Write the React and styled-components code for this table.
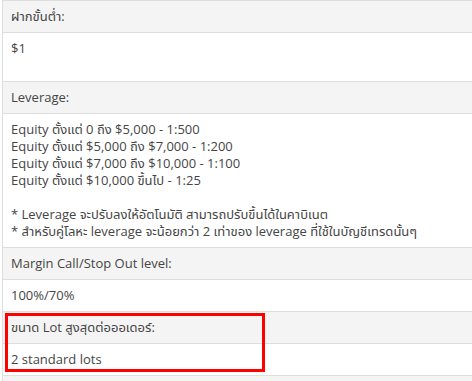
import React from "react";
import styled, { createGlobalStyle } from "styled-components";

const GlobalStyle = createGlobalStyle`
  html, body {
    margin: 0;
    padding: 0;
    background: #ffffff;
  }
  #root {
    width: 472px;
    height: 381px;
    overflow: hidden;
  }
`;

const Table = styled.div`
  position: relative;
  margin-left: 2px;
  width: 520px;
  border-top: 1px solid #dedede;
  border-left: 1px solid #dedede;
  font-family: "Open Sans", "Noto Sans", "Noto Sans Thai", sans-serif;
  font-size: 13px;
  color: #454545;
`;

const Cell = styled.div`
  padding: 7px 8px;
  line-height: 17px;
  border-bottom: 1px solid #dedede;
  background: ${(p) => (p.$head ? "#f4f4f4" : "#ffffff")};
  min-height: ${(p) => (p.$lines || 1) * 17}px;
`;

const Line = styled.div`
  white-space: nowrap;
  min-height: 17px;
`;

const Highlight = styled.div`
  position: absolute;
  left: 2px;
  top: 312px;
  width: 254px;
  height: 53px;
  border: 3px solid #ff0000;
  pointer-events: none;
`;

const rows = [
  { head: "ฝากขั้นต่ำ:", body: ["$1", ""] },
  {
    head: "Leverage:",
    body: [
      "Equity ตั้งแต่ 0 ถึง $5,000 - 1:500",
      "Equity ตั้งแต่ $5,000 ถึง $7,000 - 1:200",
      "Equity ตั้งแต่ $7,000 ถึง $10,000 - 1:100",
      "Equity ตั้งแต่ $10,000 ขึ้นไป - 1:25",
      "",
      "* Leverage จะปรับลงให้อัตโนมัติ สามารถปรับขึ้นได้ในคาบิเนต",
      "* สำหรับคู่โลหะ leverage จะน้อยกว่า 2 เท่าของ leverage ที่ใช้ในบัญชีเทรดนั้นๆ",
    ],
  },
  { head: "Margin Call/Stop Out level:", body: ["100%/70%"] },
  { head: "ขนาด Lot สูงสุดต่อออเดอร์:", body: ["2 standard lots"] },
  { head: "", body: [] },
];

export default function App() {
  return (
    <>
      <GlobalStyle />
      <Table>
        {rows.map((r, i) => (
          <React.Fragment key={i}>
            <Cell $head>
              <Line>{r.head}</Line>
            </Cell>
            {r.body.length > 0 && (
              <Cell $lines={r.body.length}>
                {r.body.map((t, j) => (
                  <Line key={j}>{t}</Line>
                ))}
              </Cell>
            )}
          </React.Fragment>
        ))}
        <Highlight />
      </Table>
    </>
  );
}
